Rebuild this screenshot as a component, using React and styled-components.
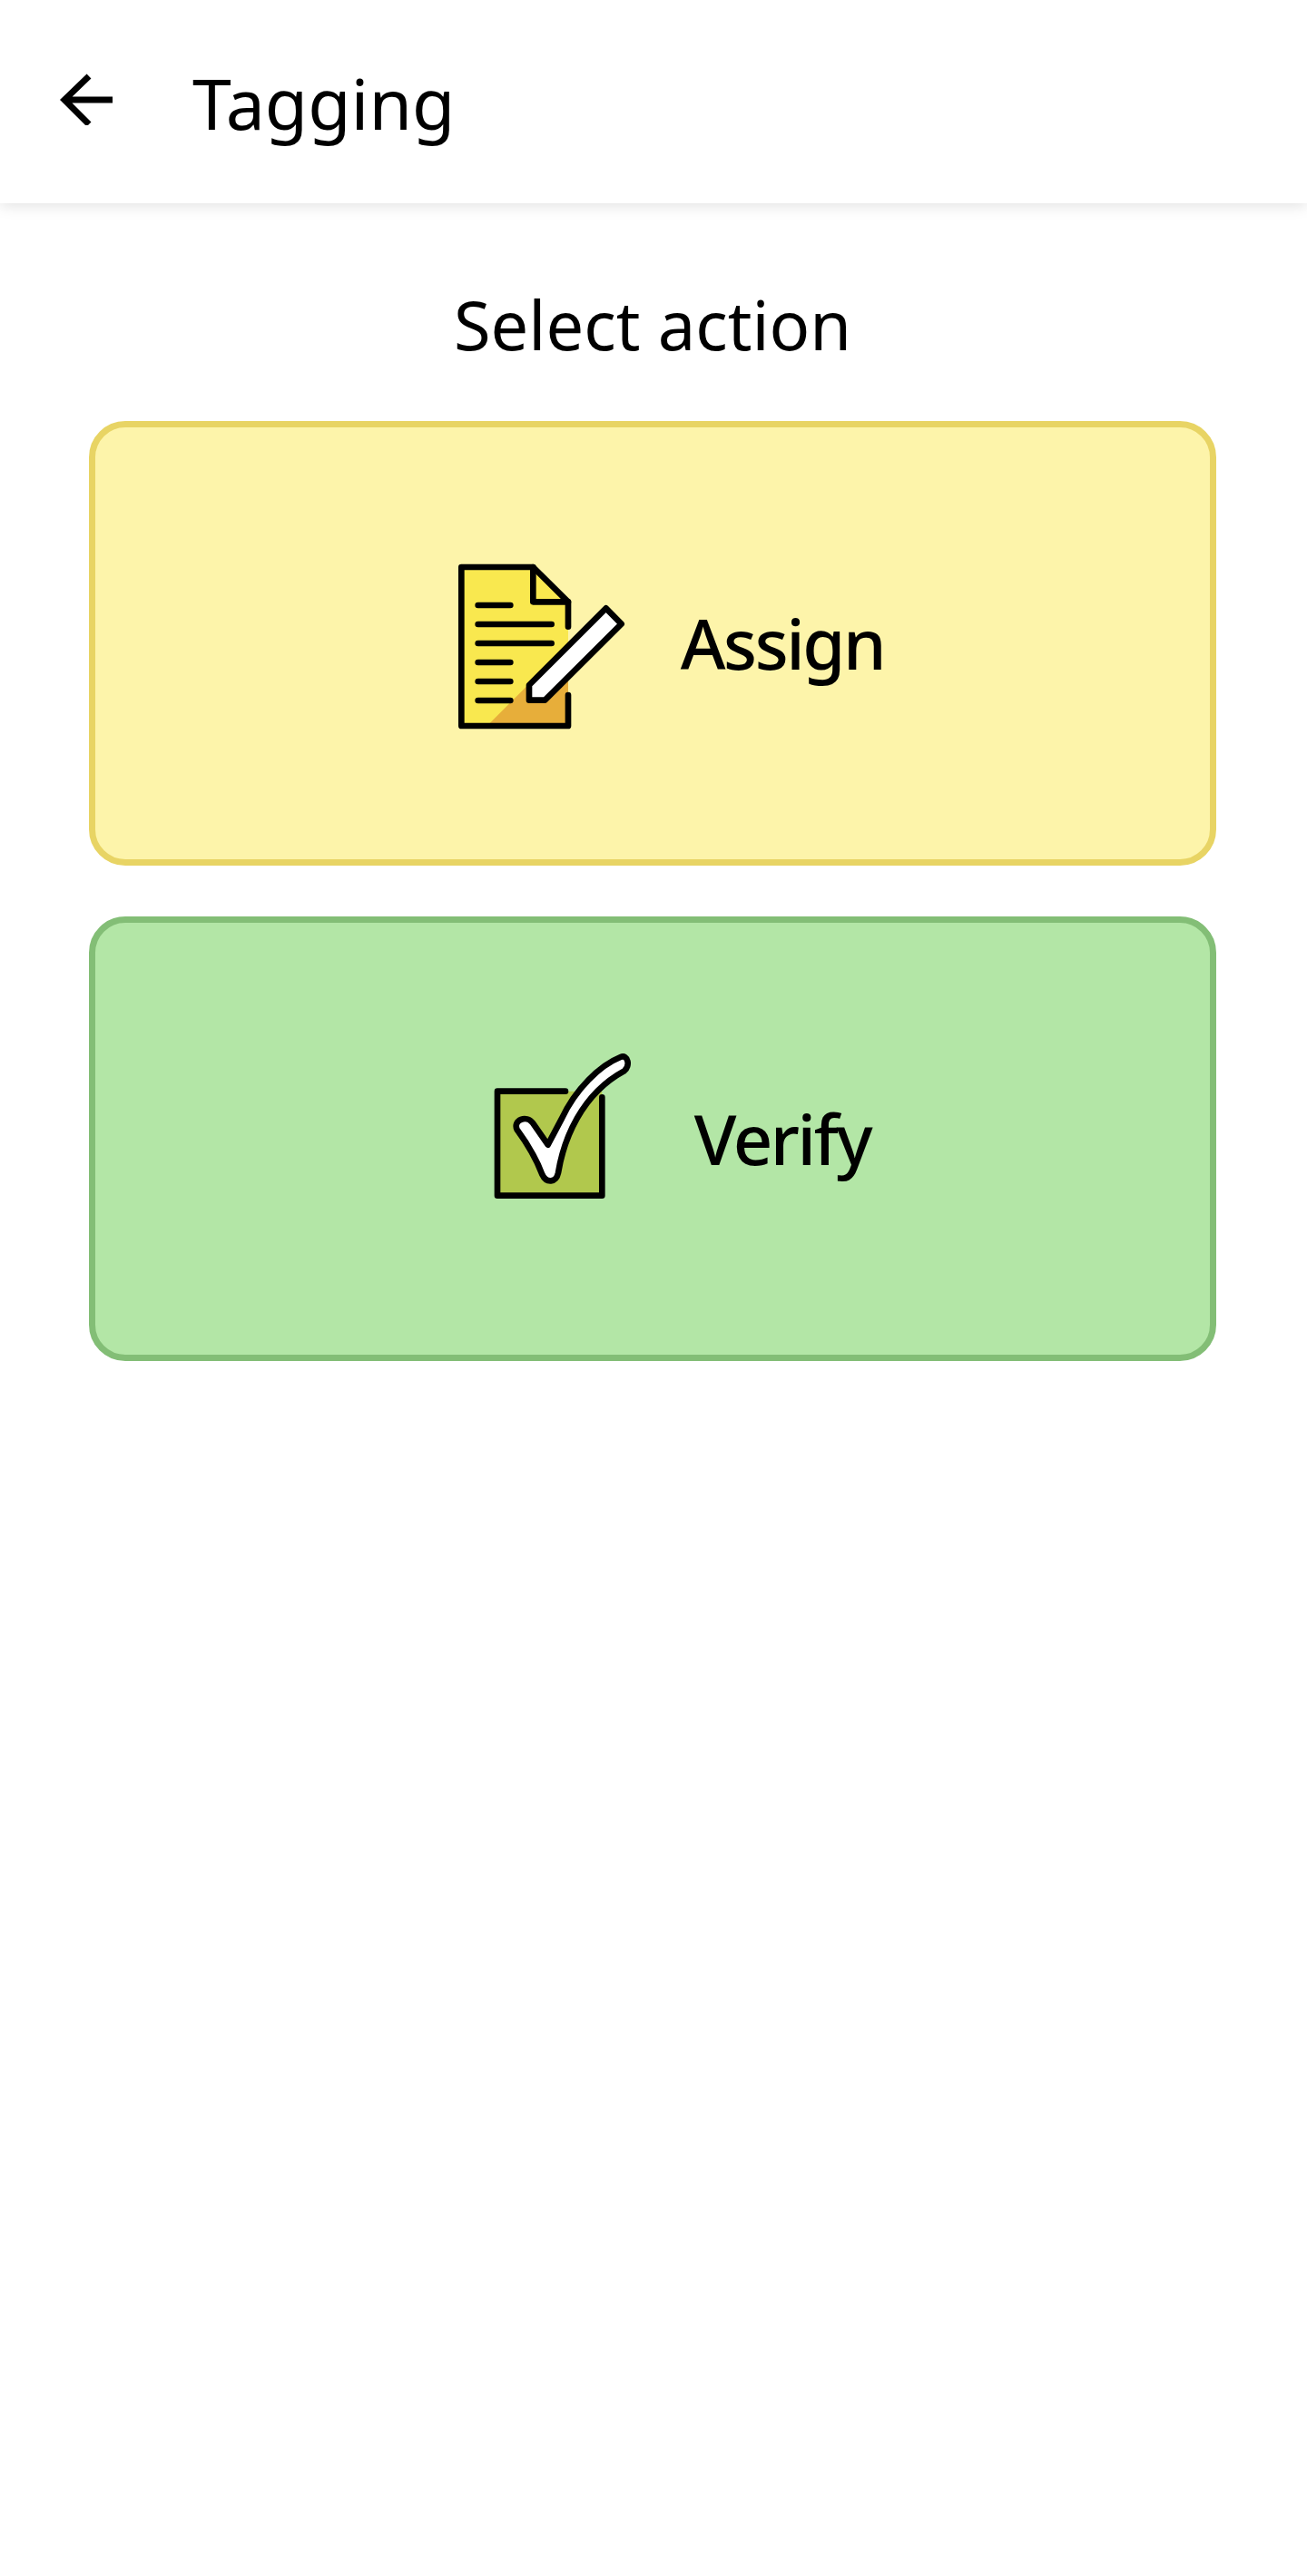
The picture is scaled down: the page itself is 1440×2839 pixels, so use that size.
import React from "react";
import styled, { createGlobalStyle } from "styled-components";

const Global = createGlobalStyle`
  html, body { margin: 0; padding: 0; background: #fff; }
  body { font-family: "Noto Sans", "Open Sans", sans-serif; color: #000; }
`;

const Page = styled.div`
  width: 1440px;
  min-height: 2839px;
  background: #fff;
`;

const Header = styled.header`
  height: 224px;
  display: flex;
  align-items: center;
  background: #fff;
  box-shadow: 0 2px 16px rgba(0, 0, 0, 0.13);
  padding-left: 65px;
  box-sizing: border-box;
`;

const BackIcon = styled.svg`
  width: 60px;
  height: 60px;
  flex: none;
  margin-bottom: 8px;
`;

const Title = styled.h1`
  margin: 2px 0 0 87px;
  font-size: 77px;
  font-weight: 400;
  line-height: 1;
`;

const Main = styled.main`
  padding: 92px 100px 0 98px;
  display: flex;
  flex-direction: column;
`;

const Heading = styled.h2`
  margin: 0 0 60px;
  height: 88px;
  line-height: 84px;
  text-align: center;
  font-size: 74px;
  font-weight: 400;
`;

const ActionCard = styled.button`
  height: 490px;
  margin-bottom: 56px;
  display: flex;
  align-items: center;
  justify-content: center;
  gap: 46px;
  border: 7px solid ${(p) => p.$edge};
  border-radius: 40px;
  background: ${(p) => p.$fill};
  padding: 0;
  font-family: inherit;
  color: #000;
`;

const ActionIcon = styled.svg`
  width: 240px;
  height: 240px;
  flex: none;
`;

const ActionLabel = styled.span`
  font-size: 76px;
  font-weight: 500;
  letter-spacing: -2.4px;
  line-height: 1;
`;

const ink = { stroke: "#000", strokeWidth: 20, strokeLinecap: "round", strokeLinejoin: "round" };

function DocIcon() {
  return (
    <ActionIcon viewBox="0 0 240 240" aria-hidden="true">
      <g transform="translate(16 11) scale(0.3333)">
        <path d="M85 75H322L438 190V600H85Z" fill="#f9e84f" />
        <path d="M170 600L438 332V600Z" fill="#e7ae3a" />
        <path d="M438 272V190L322 75H85V600H438V498" fill="none" {...ink} />
        <path d="M322 75V190H438" fill="none" {...ink} />
        <path d="M140 201H247M140 264H383M140 327H383M140 390H247M140 453H247M140 516H247" fill="none" {...ink} />
        <path d="M563 211L614 263L361 515H309V465Z" fill="#fff" {...ink} />
      </g>
    </ActionIcon>
  );
}

function CheckIcon() {
  return (
    <ActionIcon viewBox="0 0 240 240" aria-hidden="true">
      <g transform="translate(43 6) scale(0.3333)">
        <path d="M78 185H424V530H78Z" fill="#b1c84d" />
        <path d="M303 185H78V530H424V205" fill="none" {...ink} />
        <path
          d="M485 72C415 100 335 180 291 275L245 362L195 290C175 262 128 280 143 312C175 355 205 405 226 460C240 490 272 488 279 455C297 345 355 195 497 118C518 102 510 62 485 72Z"
          fill="#fff"
          {...ink}
        />
      </g>
    </ActionIcon>
  );
}

export default function App() {
  return (
    <Page>
      <Global />
      <Header>
        <BackIcon viewBox="0 0 60 60" aria-hidden="true">
          <path d="M59 32H6M33 6L6 32L33 59" fill="none" stroke="#000" strokeWidth="7" />
        </BackIcon>
        <Title>Tagging</Title>
      </Header>
      <Main>
        <Heading>Select action</Heading>
        <ActionCard $fill="#fdf4aa" $edge="#e8d464">
          <DocIcon />
          <ActionLabel>Assign</ActionLabel>
        </ActionCard>
        <ActionCard $fill="#b3e6a6" $edge="#83be76">
          <CheckIcon />
          <ActionLabel>Verify</ActionLabel>
        </ActionCard>
      </Main>
    </Page>
  );
}
